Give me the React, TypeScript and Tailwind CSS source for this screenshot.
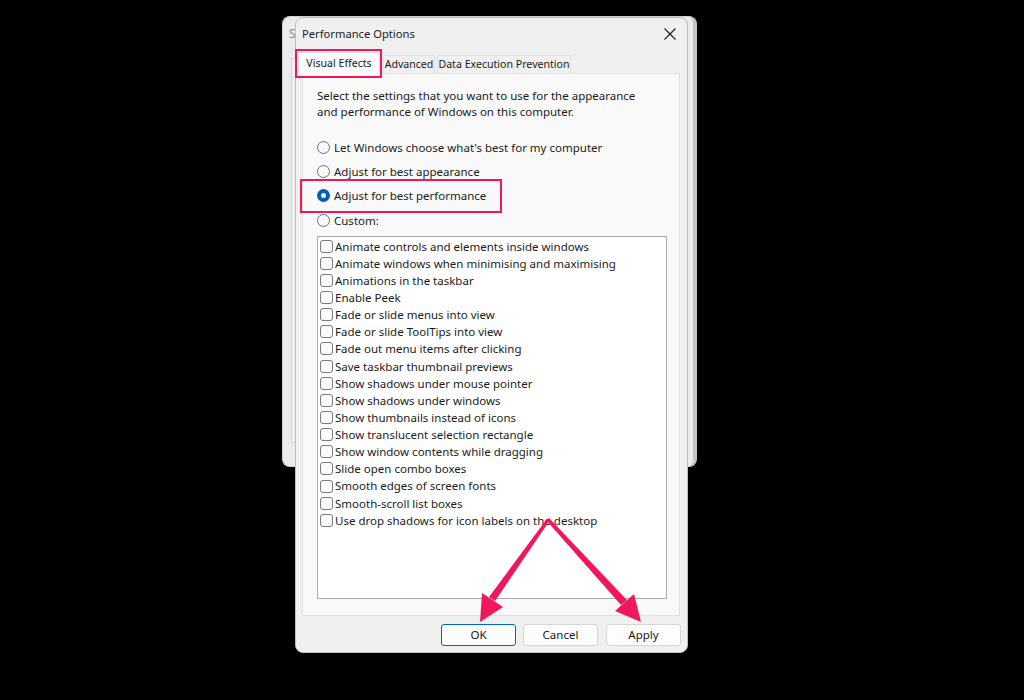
import React from "react";

const FONT = { fontFamily: '"Noto Sans", "Segoe UI", sans-serif' };

const items = [
  "Animate controls and elements inside windows",
  "Animate windows when minimising and maximising",
  "Animations in the taskbar",
  "Enable Peek",
  "Fade or slide menus into view",
  "Fade or slide ToolTips into view",
  "Fade out menu items after clicking",
  "Save taskbar thumbnail previews",
  "Show shadows under mouse pointer",
  "Show shadows under windows",
  "Show thumbnails instead of icons",
  "Show translucent selection rectangle",
  "Show window contents while dragging",
  "Slide open combo boxes",
  "Smooth edges of screen fonts",
  "Smooth-scroll list boxes",
  "Use drop shadows for icon labels on the desktop",
];

const radios = [
  { label: "Let Windows choose what's best for my computer", on: false },
  { label: "Adjust for best appearance", on: false },
  { label: "Adjust for best performance", on: true },
  { label: "Custom:", on: false },
];

function Radio({ on }: { on: boolean }) {
  return on ? (
    <span className="flex h-[13px] w-[13px] shrink-0 items-center justify-center rounded-full bg-[#005fb8]">
      <span className="h-[5px] w-[5px] rounded-full bg-white" />
    </span>
  ) : (
    <span className="h-[13px] w-[13px] shrink-0 rounded-full border border-[#6f6f6f] bg-[#f9f9f9]" />
  );
}

export default function App() {
  return (
    <div
      className="relative h-[700px] w-[1024px] overflow-hidden bg-black text-[11.5px] text-[#1b1b1b]"
      style={FONT}
    >
      {/* Background window */}
      <div className="absolute left-[282px] top-[16px] h-[451px] w-[415px] rounded-[8px] border border-[#cfcfcf] border-r-[4px] border-r-[#c4c4c4] bg-[#ebebeb]">
        <div className="pl-[6px] pt-[8px] text-[12px] text-[#8a8a8a]">S</div>
        <div className="absolute left-[8px] top-[41px] h-[385px] w-[390px] border border-[#d6d6d6] bg-[#efefef]" />
      </div>

      {/* Dialog */}
      <div className="absolute left-[295px] top-[17px] flex h-[636px] w-[393px] flex-col rounded-[8px] border border-[#bdbdbd] bg-[#f0f0f0]">
        {/* Title bar */}
        <div className="flex h-[32px] shrink-0 items-center justify-between pl-[6px] pr-[10px]">
          <span className="text-[11.2px] text-[#1b1b1b]">Performance Options</span>
          <svg width="12" height="12" viewBox="0 0 12 12" className="mr-[1px]">
            <path d="M0.5 0.5 L11.5 11.5 M11.5 0.5 L0.5 11.5" stroke="#1b1b1b" strokeWidth="1.1" fill="none" />
          </svg>
        </div>

        {/* Tabs */}
        <div className="relative z-10 flex h-[23px] shrink-0 items-end pl-[2px] text-[10.6px]">
          <div className="-mb-[1px] flex h-[22px] w-[82px] items-center justify-center whitespace-nowrap border border-b-0 border-[#e0e0e0] bg-[#f9f9f9] text-[#1b1b1b]">
            Visual Effects
          </div>
          <div className="ml-[3px] flex h-[18px] w-[52px] items-center justify-center whitespace-nowrap border border-b-0 border-[#e3e3e3] bg-[#f0f0f0]">
            Advanced
          </div>
          <div className="ml-[2px] flex h-[18px] w-[134px] items-center justify-center whitespace-nowrap border border-b-0 border-[#e3e3e3] bg-[#f0f0f0]">
            Data Execution Prevention
          </div>
        </div>

        {/* Panel */}
        <div className="ml-[6px] mr-[7px] flex flex-1 flex-col border border-[#e0e0e0] bg-[#f9f9f9] pl-[14px] pt-[14px]">
          <p className="leading-[16px]">
            Select the settings that you want to use for the appearance
            <br />
            and performance of Windows on this computer.
          </p>
          <div className="mt-[15px] flex flex-col">
            {radios.map((r) => (
              <div key={r.label} className="flex h-[24.4px] items-center gap-[4px]">
                <Radio on={r.on} />
                <span>{r.label}</span>
              </div>
            ))}
          </div>
          <div className="mt-[3px] h-[363px] w-[350px] border border-[#a9a9a9] bg-white pl-[2px] pt-[1px]">
            {items.map((t) => (
              <div key={t} className="flex h-[17.15px] items-center gap-[2px]">
                <span className="h-[13px] w-[13px] shrink-0 rounded-[3px] border border-[#7a7a7a] bg-[#fbfbfb]" />
                <span className="whitespace-nowrap">{t}</span>
              </div>
            ))}
          </div>
        </div>

        {/* Buttons */}
        <div className="flex h-[36px] shrink-0 items-start justify-end gap-[7px] pr-[6px] pt-[8px]">
          <button className="h-[22px] w-[75px] rounded-[3px] border border-[#0067c0] bg-[#fdfdfd] text-[11.5px] text-[#1b1b1b]">
            OK
          </button>
          <button className="h-[22px] w-[75px] rounded-[3px] border border-[#d5d5d5] bg-[#fdfdfd] text-[11.5px] text-[#1b1b1b]">
            Cancel
          </button>
          <button className="ml-[1px] h-[22px] w-[75px] rounded-[3px] border border-[#d5d5d5] bg-[#fdfdfd] text-[11.5px] text-[#1b1b1b]">
            Apply
          </button>
        </div>
      </div>

      {/* Highlight rectangles */}
      <div className="pointer-events-none absolute left-[295px] top-[49px] h-[29px] w-[87px] border-2 border-[#f2165c]" />
      <div className="pointer-events-none absolute left-[300px] top-[179px] h-[34px] w-[202px] border-2 border-[#f2165c]" />

      {/* Arrows */}
      <svg className="pointer-events-none absolute left-0 top-0" width="1024" height="700" viewBox="0 0 1024 700">
        <g fill="#f2165c">
          <polygon points="546,520 548,523 495,601 489,597" />
          <polygon points="480,622 482,593 503,607" />
          <polygon points="546,520 549,518 627,600 621,605" />
          <polygon points="641,622 615,611 634,594" />
        </g>
      </svg>
    </div>
  );
}
